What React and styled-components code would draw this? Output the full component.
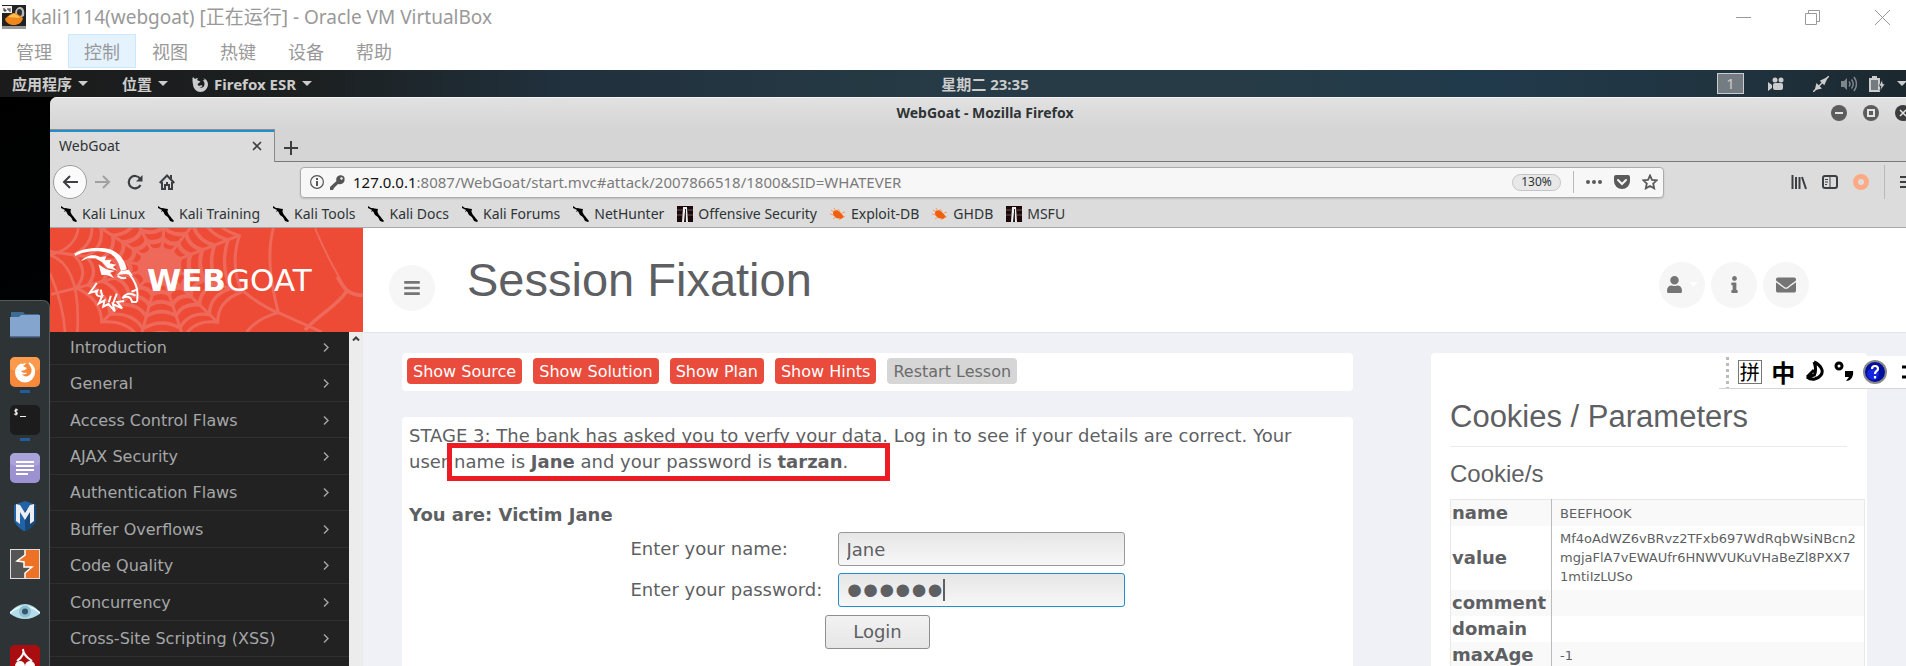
import React from "react";
import styled, { createGlobalStyle } from "styled-components";
import { FaUser, FaInfo, FaEnvelope, FaBars } from "react-icons/fa";

const ui = `"Noto Sans", "Noto Sans CJK SC", sans-serif`;
const page = `"DejaVu Sans", sans-serif`;
const head = `"Liberation Sans", sans-serif`;

const GlobalStyle = createGlobalStyle`
  * { box-sizing: border-box; }
  body { margin: 0; background: #03070b; }
  button, input { font: inherit; color: inherit; }
  button { padding: 0; border: 0; background: none; }
  h1, h2, h3, p, ul { margin: 0; padding: 0; font-weight: 400; }
  a { color: inherit; text-decoration: none; }
  svg { display: block; flex: none; }
`;

const Screen = styled.div`
  position: relative;
  display: flex;
  flex-direction: column;
  height: 100vh;
  overflow: hidden;
  font-family: ${ui};
`;

/* host window */
const HostBar = styled.header`
  background: #fff;
  color: #999;
  height: 70px;
  flex: none;
`;
const HostTitle = styled.div`
  display: flex;
  align-items: center;
  height: 34px;
  padding: 0 16px 0 2px;
`;
const HostName = styled.h1`
  flex: 1;
  margin-left: 5px;
  font-size: 19px;
  line-height: 34px;
`;
const HostButtons = styled.div`
  display: flex;
  gap: 54px;
`;
const HostMenu = styled.nav`
  display: flex;
`;
const HostMenuItem = styled.button`
  width: 68px;
  height: 34px;
  font-size: 18px;
  border: 1px solid ${(p) => (p.$active ? "#cce8ff" : "transparent")};
  background: ${(p) => (p.$active ? "#e5f3ff" : "transparent")};
`;

/* desktop panel */
const Panel = styled.div`
  display: grid;
  grid-template-columns: 1fr auto 1fr;
  align-items: center;
  flex: none;
  height: 27px;
  margin-right: -64px;
  padding: 0 12px;
  color: #ccc;
  font-size: 15px;
  line-height: 26px;
  font-weight: 700;
  background: linear-gradient(90deg, #1b1b1b 0, #1c2021 16%, #20303c 28%, #263b45 48%, #263b45 62%, #213a4b 75%, #20333f 88%, #1b272d 97%);
`;
const PanelMenus = styled.div`
  display: flex;
  align-items: center;
`;
const PanelMenu = styled.button`
  display: flex;
  align-items: center;
  gap: 6px;
  margin-right: ${(p) => p.$after || 0}px;
`;
const Tray = styled.div`
  display: flex;
  align-items: center;
  justify-content: flex-end;
  gap: 12px;
  padding-right: 51px;
`;
const Workspace = styled.span`
  width: 27px;
  height: 21px;
  border: 1px solid #ccc;
  background: #737c82;
  line-height: 19px;
  text-align: center;
  font-weight: 400;
`;
const TrayIcon = styled.span`
  margin-left: ${(p) => p.$before || 0}px;
`;

const Desktop = styled.div`
  display: flex;
  flex: 1;
  min-height: 0;
  margin-right: -14px;
  background: linear-gradient(160deg, #000 0, #020a10 100%);
`;
const DockColumn = styled.aside`
  width: 50px;
  flex: none;
  padding-top: 203px;
`;
const Dock = styled.nav`
  display: flex;
  flex-direction: column;
  height: 100%;
  padding: 8px 9px 0 10px;
  background: #2e3436;
  border: solid #555a5c;
  border-width: 1px 1px 0 0;
  border-radius: 0 7px 0 0;
`;
const DockItem = styled.button`
  display: flex;
  flex-direction: column;
  align-items: center;
  gap: 3px;
  height: 48px;
  flex: none;
`;
const Running = styled.span`
  width: 10px;
  height: 3px;
  background: #215d9c;
`;

/* browser */
const Browser = styled.main`
  display: flex;
  flex-direction: column;
  flex: 1;
  min-width: 0;
  border-radius: 7px 0 0 0;
  overflow: hidden;
  background: #dcdcdc;
  color: #2e3436;
`;
const BrowserTitle = styled.div`
  position: relative;
  flex: none;
  height: 32px;
  border-top: 1px solid #f3f3f3;
  background: linear-gradient(#e1e1e1, #d5d5d5);
  font-size: 14px;
  font-weight: 700;
  line-height: 30px;
  text-align: center;
`;
const WindowButtons = styled.div`
  position: absolute;
  right: 9px;
  top: 7px;
  display: flex;
  gap: 16px;
`;
const TabStrip = styled.div`
  display: flex;
  flex: none;
  height: 33px;
  background: #d5d5d5;
`;
const Tab = styled.button`
  display: flex;
  align-items: center;
  justify-content: space-between;
  width: 225px;
  padding: 0 12px 1px 9px;
  font-size: 14px;
  border-right: 1px solid #8c8c8c;
  border-top: 1px solid #8c8c8c;
  background: #dcdcdc;
  box-shadow: inset 0 2px #1f8fd0;
`;
const TabRest = styled.div`
  flex: 1;
  padding: 9px 9px 0;
  border-bottom: 1px solid #77797a;
`;
const Toolbar = styled.div`
  display: flex;
  align-items: center;
  flex: none;
  height: 38px;
  padding: 2px 16px 0 3px;
`;
const BackButton = styled.button`
  display: grid;
  place-items: center;
  width: 34px;
  height: 34px;
  border: 1px solid #9c9c9c;
  border-radius: 50%;
  background: #fafafa;
`;
const ToolButton = styled.button`
  display: grid;
  place-items: center;
  width: 32px;
  height: 32px;
`;
const Address = styled.div`
  display: flex;
  align-items: center;
  flex: 1;
  height: 31px;
  margin: 0 127px 0 117px;
  padding: 0 5px 0 9px;
  border: 1px solid #ababab;
  border-radius: 4px;
  background: #f7f7f7;
  box-shadow: 0 1px 2px #0002;
  font-size: 15px;
`;
const Identity = styled.div`
  display: flex;
  align-items: center;
  gap: 6px;
`;
const Url = styled.div`
  flex: 1;
  margin-left: 8px;
  color: #7b7b7b;
  b { color: #111; font-weight: 400; }
`;
const Zoom = styled.button`
  width: 49px;
  height: 17px;
  margin-right: 12px;
  border: 1px solid #c4c4c4;
  border-radius: 9px;
  background: #e8e8e8;
  font-size: 12px;
  line-height: 14px;
`;
const Divider = styled.span`
  width: 1px;
  height: ${(p) => p.$h}px;
  background: #b9b9b9;
`;
const AddressActions = styled.div`
  display: flex;
  gap: 12px;
  margin-left: 12px;
`;
const RightTools = styled.div`
  display: flex;
  align-items: center;
  gap: 15px;
  height: 34px;
  margin-right: -12px;
`;
const Bookmarks = styled.nav`
  display: flex;
  align-items: center;
  flex: none;
  gap: 13px;
  height: 28px;
  padding: 0 11px;
  border-bottom: 1px solid #a9a9a9;
  font-size: 14px;
`;
const Bookmark = styled.a`
  display: flex;
  align-items: center;
  gap: 5px;
  line-height: 27px;
`;

/* web application */
const Site = styled.div`
  display: grid;
  grid-template-columns: 313px 1fr;
  grid-template-rows: 105px 1fr;
  flex: 1;
  min-height: 0;
  background: #f0f1f7;
  color: #5e5f63;
  font-family: ${page};
`;
const Brand = styled.a`
  position: relative;
  display: flex;
  align-items: center;
  gap: 8px;
  height: 104px;
  padding-left: 24px;
  background: #ed4b36;
  color: #fff;
  font-size: 31px;
  overflow: hidden;
`;
const WebLayer = styled.svg`
  position: absolute;
  inset: 0;
  width: 313px;
  height: 104px;
`;
const GoatDrawing = styled.svg`
  position: relative;
`;
const BrandName = styled.span`
  position: relative;
`;
const SiteHeader = styled.header`
  display: flex;
  align-items: center;
  padding: 0 111px 0 26px;
  background: #fff;
  border-bottom: 1px solid #e4e5ea;
`;
const Round = styled.button`
  display: flex;
  align-items: center;
  justify-content: center;
  gap: 6px;
  width: 46px;
  height: 46px;
  border-radius: 50%;
  background: #f6f6f6;
  color: #757575;
  font-size: 18px;
`;
const MenuSlot = styled.div`
  padding-top: 15px;
`;
const LessonTitle = styled.h1`
  flex: 1;
  margin-left: 32px;
  font: 47px/104px ${head};
`;
const HeaderActions = styled.div`
  display: flex;
  gap: 6px;
  padding-top: 9px;
`;
const Side = styled.div`
  display: flex;
  min-height: 0;
  margin-top: -1px;
  overflow: hidden;
  background: #222;
`;
const Lessons = styled.ul`
  display: grid;
  grid-template-rows: repeat(9, 1fr);
  flex: 1;
  height: 328px;
  margin-top: -3px;
  list-style: none;
`;
const Lesson = styled.li`
  display: grid;
  border-bottom: 1px solid #2f2f2f;
`;
const LessonLink = styled.a`
  display: flex;
  align-items: center;
  justify-content: space-between;
  padding: 1px 20px 0;
  color: #a5a7a9;
  font-size: 16px;
`;
const ScrollTrack = styled.div`
  width: 14px;
  padding: 4px 3px;
  background: #ececec;
`;
const Columns = styled.div`
  display: grid;
  grid-template-columns: 951fr 436fr;
  gap: 78px;
  min-height: 0;
  padding: 20px 53px 0 39px;
`;
const LessonColumn = styled.div`
  display: flex;
  flex-direction: column;
  gap: 26px;
`;
const Actions = styled.div`
  display: flex;
  gap: 11px;
  padding: 5px 5px 7px;
  border-radius: 4px;
  background: #fff;
`;
const Action = styled.button`
  height: 26px;
  padding: 0 6px;
  border-radius: 4px;
  font-size: 16px;
  background: ${(p) => (p.$muted ? "#d6d6d6" : "#e94c3d")};
  color: ${(p) => (p.$muted ? "#6b6b6b" : "#fff")};
`;
const LessonCard = styled.section`
  position: relative;
  flex: 1;
  padding: 6px 7px;
  border-radius: 4px 4px 0 0;
  background: #fff;
  font-size: 18px;
  line-height: 26px;
`;
const Marker = styled.span`
  position: absolute;
  left: 45px;
  top: 26px;
  width: 443px;
  height: 38px;
  border: 5px solid #ed1c24;
`;
const Who = styled.p`
  margin-top: 27px;
  font-weight: 700;
`;
const LoginForm = styled.form`
  display: grid;
  grid-template-columns: 207px 287px;
  justify-content: center;
  align-items: center;
  row-gap: 7px;
  margin-top: 4px;
`;
const Field = styled.div`
  position: relative;
`;
const Input = styled.input`
  display: block;
  width: 100%;
  height: 34px;
  padding: 0 8px;
  border: 1px solid #999;
  border-radius: 3px;
  outline: 0;
  background: linear-gradient(#e6e6e6, #f7f7f7);
`;
const PasswordInput = styled(Input)`
  border-color: #1f8fd0;
  font: 46px/32px ${head};
`;
const Caret = styled.span`
  position: absolute;
  left: 105px;
  top: 6px;
  width: 2px;
  height: 22px;
  background: #5e5f63;
`;
const Submit = styled.button`
  grid-column: 1 / -1;
  justify-self: center;
  width: 105px;
  height: 34px;
  margin-top: 1px;
  border: 1px solid #8f8f8f;
  border-radius: 3px;
  background: linear-gradient(#f2f2f2, #e6e6e6);
`;
const CookieCard = styled.aside`
  min-width: 0;
  padding: 38px 2px 0 19px;
  border-radius: 4px 4px 0 0;
  background: #fff;
`;
const CookieTitle = styled.h2`
  margin-right: 18px;
  padding-bottom: 4px;
  border-bottom: 1px solid #ebebeb;
  font: 31px/51px ${head};
`;
const CookieSub = styled.h3`
  font: 24px/26px ${head};
  margin: 14px 0 12px;
`;
const CookieTable = styled.table`
  width: 100%;
  table-layout: fixed;
  border-collapse: collapse;
  border: 1px solid #e8e8e8;
  font-size: 13px;
`;
const CookieRow = styled.tr`
  height: 26px;
  &:nth-child(odd) { background: #f9f9f9; }
`;
const Key = styled.th`
  width: 101px;
  padding: 0 1px;
  border-right: 1px solid #bbb;
  font-size: 18px;
  line-height: 26px;
  text-align: left;
`;
const Value = styled.td`
  padding: ${(p) => (p.$long ? "3px 8px 4px" : "0 8px")};
  line-height: 19px;
  word-break: break-all;
`;
const ImeBar = styled.div`
  position: absolute;
  right: 0;
  top: 356px;
  display: flex;
  align-items: center;
  gap: 9px;
  width: 187px;
  height: 33px;
  padding-left: 7px;
  background: #fff;
  border-bottom: 1px solid #d5d5d5;
  color: #000;
  font: 24px/30px "Noto Sans CJK SC", sans-serif;
`;
const ImeMode = styled.button`
  width: 24px;
  height: 24px;
  border: 1px solid #777;
  font-size: 20px;
  line-height: 20px;
`;
const ImeLang = styled.button`
  width: 26px;
  font-weight: 700;
  line-height: 30px;
`;

/* drawings */
const Down = () => <svg width="10" height="5"><path d="M0 0h10L5 5z" fill="#ccc" /></svg>;

const VmIcon = () => (
  <svg width="24" height="24" viewBox="0 0 24 24">
    <rect width="24" height="24" fill="#222" />
    <path d="M13 9C13 4 16 2 18 2c3 0 5 3 4 9l-4 2z" fill="#b9b9b9" />
    <ellipse cx="17.500" cy="7.500" rx="2.500" ry="3.500" fill="#333" />
    <rect x="0" y="1" width="10" height="7" fill="#f4f4f4" />
    <path d="M2 3v3h2V5H2M6 3v2h2M8 3v4" stroke="#333" fill="none" />
    <path d="M3 14c3-3 6-6 9-6s6 3 9 5c-1 5-5 7-9 7s-8-2-9-6z" fill="#f0861c" />
    <path d="M6 12c3-2 5-4 7-3s4 2 5 4z" fill="#ffc04d" />
    <path d="M0 21h24v3H0z" fill="#999" />
  </svg>
);
const Fox = ({ size = 16, color = "#ccc", hole = "#1c1f20" }) => (
  <svg width={size} height={size} viewBox="0 0 16 16">
    <path d="M1 1l2 2c1-.5 2-1 3-1L5 4l2 1 1.500.5L7 7 5.500 8c.5 2 2 2 3 1.500 1-.5 2 0 2 .5-1 1-2 1.500-3 1.500 3 1 5-1 5-3.500 0-2-1-3-2-4l2 .5-1-2.500c3 1 4.500 4 4.500 6.500a7.500 7.500 0 0 1-15 0C.5 5 0 3 1 1z" fill={color} />
    <path d="M11 0c1 1 2 3 2 4" stroke={hole} strokeWidth=".6" fill="none" />
  </svg>
);
const Dragon = () => (
  <svg width="16" height="16" viewBox="0 0 16 16">
    <path d="M0 0l3 2 4 1 2 2 2 4 5 6-1 1-3-1-2-4-3-2-2-4-2 1 1-2-4-2z" fill="#000" />
    <path d="M3 2l7 1-1 4-3-1zM6 7l6 3 2 5-4-4z" fill="#000" />
  </svg>
);
const Offsec = () => (
  <svg width="16" height="16" viewBox="0 0 16 16">
    <rect width="16" height="16" fill="#1c0808" />
    <path d="M0 4h5M11 4h5M0 9h5M11 9h5" stroke="#655" />
    <path d="M6 1h4l1 15H9V6H8l-1 10H5z" fill="#eee" />
    <path d="M8 3h1v12H8z" fill="#222" />
  </svg>
);
const Bug = () => (
  <svg width="16" height="16" viewBox="0 0 16 16">
    <path d="M3 5l4-1 4 3 3 4-3 2-5-1-3-3z" fill="#f0600c" />
    <path d="M1 4l3 2M4 2l2 3M0 8l4 1M3 13l3-2M8 3l2 3M12 7l3-1M13 10l2 1M9 12l1 2" stroke="#f59a63" />
  </svg>
);
const stroke = { fill: "none", stroke: "#3c3f41", strokeWidth: 2 };

const Back = () => <svg width="16" height="16" viewBox="0 0 16 16"><path d="M16 8H2M8 2L2 8l6 6" {...stroke} /></svg>;
const Forward = () => <svg width="16" height="16" viewBox="0 0 16 16"><path d="M0 8h14M8 2l6 6-6 6" {...stroke} stroke="#a0a0a0" /></svg>;
const Reload = () => (
  <svg width="16" height="16" viewBox="0 0 16 16">
    <path d="M13.500 11A6.200 6.200 0 1 1 13 4.500" {...stroke} strokeWidth="2.200" />
    <path d="M15.500 1v6.500H9z" fill="#3c3f41" />
  </svg>
);
const Home = () => (
  <svg width="16" height="16" viewBox="0 0 16 16">
    <path d="M.7 9L8 1.500 15.300 9" {...stroke} />
    <path d="M3 8v7h3v-4h4v4h3V8" {...stroke} />
    <path d="M7 8h2v2H7zM11 1h2v4h-2z" fill="#3c3f41" />
  </svg>
);
const InfoRing = () => (
  <svg width="14" height="14" viewBox="0 0 14 14">
    <circle cx="7" cy="7" r="6.400" fill="none" stroke="#555" strokeWidth="1.200" />
    <path d="M6 3h2v2H6zM6 6h2v5H6z" fill="#555" />
  </svg>
);
const KeyIcon = () => (
  <svg width="15" height="15" viewBox="0 0 15 15">
    <path d="M14.500 2.500C13-.5 9-.5 7 2c-1 1.500-1 3-.5 4L0 12v3h3l1-2 1-1 1-1 2-2c3 1 6-1 6.500-3z" fill="#555" />
    <circle cx="11.500" cy="3.500" r="1.200" fill="#f7f7f7" />
  </svg>
);
const Dots = () => <svg width="16" height="16"><g fill="#5a5a5a"><circle cx="2" cy="8" r="2" /><circle cx="8" cy="8" r="2" /><circle cx="14" cy="8" r="2" /></g></svg>;
const Pocket = () => (
  <svg width="16" height="16" viewBox="0 0 16 16">
    <path d="M2 1h12q2 0 2 2v4a8 8 0 0 1-16 0V3q0-2 2-2z" fill="#5a5a5a" />
    <path d="M4 6l4 4 4-4" stroke="#f7f7f7" strokeWidth="2" fill="none" strokeLinecap="round" />
  </svg>
);
const Star = () => <svg width="16" height="16" viewBox="0 0 16 16"><path d="M8 1.500l2 4.300 4.700.5-3.500 3.200 1 4.900L8 12l-4.200 2.400 1-4.900L1.300 6.300 6 5.800z" fill="none" stroke="#5a5a5a" strokeWidth="1.800" /></svg>;
const Library = () => <svg width="16" height="16" viewBox="0 0 16 16"><path d="M1.500 1v14M5 3v12M8.500 3v12M11 3l4 12" {...stroke} /></svg>;
const SidebarIcon = () => (
  <svg width="16" height="16" viewBox="0 0 16 16">
    <rect x="1" y="2" width="14" height="12" rx="2" {...stroke} />
    <path d="M8 2v12" stroke="#3c3f41" /><path d="M3 5.500h3M3 8h3M3 10.500h2" stroke="#3c3f41" />
  </svg>
);
const Ring = () => <svg width="16" height="16"><circle cx="8" cy="8" r="5.500" fill="none" stroke="#ffaa85" strokeWidth="5" /></svg>;
const Burger = () => <svg width="16" height="16"><path d="M0 3h16M0 8h16M0 13h16" {...stroke} /></svg>;
const Chevron = () => <svg width="6" height="9" viewBox="0 0 6 9"><path d="M1 .5l4 4-4 4" fill="none" stroke="#a5a7a9" strokeWidth="1.400" /></svg>;

const WinDot = ({ d, dark }) => (
  <svg width="16" height="16" viewBox="0 0 16 16">
    <circle cx="8" cy="8" r="8" fill={dark ? "#3c3c3c" : "#5c5c5c"} />
    <path d={d} fill="none" stroke="#e4e4e4" strokeWidth={dark ? 1.5 : 2} />
  </svg>
);

const Camera = () => (
  <svg width="16" height="16" viewBox="0 0 16 16" fill="#ccc">
    <circle cx="7" cy="4" r="2.500" /><circle cx="13" cy="4" r="2.500" />
    <rect x="5" y="7" width="10" height="7" rx="2" /><path d="M0 6l4 3v3l-4 3z" />
  </svg>
);
const Plug = () => (
  <svg width="16" height="16" viewBox="0 0 16 16">
    <path d="M0 16L16 0" stroke="#ccc" strokeWidth="1.500" />
    <path d="M3 13l1-4 3 3zM13 3L8.500 5 11 7.500z" fill="#ccc" stroke="#ccc" strokeWidth="2" />
  </svg>
);
const Volume = () => (
  <svg width="16" height="16" viewBox="0 0 16 16">
    <path d="M0 5h3l3-3v12l-3-3H0z" fill="#7d868b" />
    <path d="M8 5.500q2 2.500 0 5M10.500 3.500q3.500 4.500 0 9M13 1q5 7 0 14" fill="none" stroke="#7d868b" strokeWidth="1.500" />
  </svg>
);
const Battery = () => (
  <svg width="16" height="16" viewBox="0 0 16 16">
    <path d="M0 2h3V0h5v2h3v14H0z" fill="#ccc" /><path d="M2 4h7v10H2z" fill="#727b80" />
    <path d="M13 4l-3 6h2l-1 5 5-7h-2z" fill="#ccc" stroke="#1e2b33" strokeWidth=".6" />
  </svg>
);

const spokes = [0.35, 0.85, 1.3, 1.8, 2.3, 2.85, 3.3, 3.8, 4.3, 4.8, 5.3, 5.85];
const point = (r, a) => `${Math.round(480 + r * Math.cos(a))} ${Math.round(140 + r * Math.sin(a) * 0.85)}`;
const ringPath = (r) =>
  spokes.map((a, i) => {
    const next = i === spokes.length - 1 ? spokes[0] + Math.PI * 2 : spokes[i + 1];
    return `${i ? "" : `M${point(r, a)}`}Q${point(r * 0.8, (a + next) / 2)} ${point(r, next)}`;
  }).join("");

const SpiderWeb = () => (
  <WebLayer viewBox="150 24 939 312" preserveAspectRatio="none" aria-hidden="true">
    <g fill="none" stroke="#ee695a">
      {[65, 100, 140, 180, 225, 262].map((r, i) => <path key={r} d={ringPath(r)} strokeWidth={14 - i} />)}
      {spokes.map((a) => <path key={a} d={`M480 140L${point(a > 2.6 && a < 3.6 ? 340 : 260, a)}`} strokeWidth="9" />)}
      <path strokeWidth="9" d="M720 205C760 240 800 265 835 278L965 336M820 24C798 110 815 200 835 278 790 290 760 310 740 336" />
      <path strokeWidth="6" d="M945 24C975 100 1010 160 1040 212" />
      <path strokeWidth="11" d="M1012 170C1030 205 1045 225 1089 226M1040 214C1010 260 960 280 915 330" />
      <path strokeWidth="8" d="M150 105C210 125 240 200 232 336M150 105C210 90 230 60 235 24M150 160C180 230 192 280 195 336" />
    </g>
    <ellipse cx="480" cy="140" rx="62" ry="50" fill="#ee695a" />
  </WebLayer>
);

const Goat = () => (
  <GoatDrawing width="65" height="66" viewBox="222 78 194 198" aria-hidden="true">
    <g fill="#fff">
      <path d="M222 98C250 80 300 78 330 85 362 98 374 120 380 145L362 150C356 125 348 106 325 96 295 87 250 89 226 105z" />
      <path d="M242 121C255 104 280 97 300 108L318 106 314 118 334 116 328 127 348 131 338 138 352 149 322 141 306 124 286 112 262 112z" />
      <path d="M295 130L318 145 344 150 330 155 342 171 320 162 304 162z" />
      <path d="M350 162L362 150 386 146 398 164 378 159z" />
    </g>
    <g fill="none" stroke="#fff" strokeWidth="6">
      <path d="M386 156C400 175 413 195 412 218L411 242M410 206L394 212M406 224C390 213 374 218 367 232 378 223 392 226 396 243L410 243" />
      <path d="M352 164C362 172 370 174 378 170" />
      <path d="M290 186L269 215 291 209C284 221 294 228 306 226L296 247 313 238 309 257 325 249 344 271 338 249 366 262 351 243 372 240M306 226L302 206M326 244L332 224M338 249L350 218" />
    </g>
  </GoatDrawing>
);

const Tile = ({ children }) => <svg width="30" height="30" viewBox="0 0 30 30">{children}</svg>;
const dock = [
  ["Files", <Tile key="i"><path d="M1 3h12l2 2h14v10H1z" fill="#3d6c92" /><path d="M0 8h9l2-2h19v22H0z" fill="#84a5cd" /><path d="M0 27h30v1.500H0z" fill="#536f97" /></Tile>],
  ["Firefox", <Tile key="i"><rect width="30" height="30" rx="5" fill="#f7893c" /><rect width="30" height="14" rx="5" fill="#fb9a4c" /><circle cx="15" cy="15.500" r="10" fill="#fff" /><path d="M8 4l4 3 4-1-2 3 5 1 3-6H9z" fill="#fb9a4c" /><path d="M11 14l4-1 2-2-4-2 4-2c6 2 6 10 1 12-2 1-5 0-6-2 2 1 4 0 5-1-2-1-3 1-6-2z" fill="#f7893c" /><path d="M19 6c5 3 6 8 4 12" stroke="#fff" strokeWidth="2" fill="none" /></Tile>, true],
  ["Terminal", <Tile key="i"><rect width="30" height="30" rx="5" fill="#1c1c1c" /><path d="M8 5c-3-1-4 1-2 2s2 3-2 2M6 3.500v7M10 11.500h6" stroke="#f0f0f0" fill="none" strokeWidth="1.200" /></Tile>, true],
  ["Text editor", <Tile key="i"><rect width="30" height="30" rx="5" fill="#9c92d2" /><rect width="30" height="13" rx="5" fill="#a9a3da" /><path d="M6 9h18M6 13h18M6 17h18M6 21h12" stroke="#fff" strokeWidth="2" /></Tile>],
  ["Metasploit", <Tile key="i"><path d="M15 0l11 4v13c0 7-7 11-11 14C11 28 4 24 4 17V4z" fill="#2263a8" /><path d="M15 9l11-5v13c0 7-7 11-11 14z" fill="#174678" /><path d="M6 3l4 1 5 8 5-8 4-1v17l-4 3V11l-5 8-5-8v12l-4-3z" fill="#eceef5" /></Tile>],
  ["Burp Suite", <Tile key="i"><rect x=".5" y=".5" width="29" height="29" fill="#555" stroke="#ddd" /><path d="M15 1h14v28H15v-5l7-6h-8v-5l-7-1 8-6z" fill="#ed7226" /><path d="M15 1v5l-8 6 7 1v5l8 0-7 6v5" stroke="#fff" fill="none" strokeWidth="1.500" /></Tile>],
  ["Zenmap", <Tile key="i"><path d="M-1 16Q7 7 15 7t16 9Q23 22 15 22T-1 16z" fill="#b4dce9" /><path d="M0 16Q15 3 30 16" stroke="#e8fbff" strokeWidth="1.500" fill="none" /><circle cx="15" cy="14.500" r="6" fill="#8ec0d2" /><circle cx="15" cy="14.500" r="3" fill="#36566a" /></Tile>],
  ["CherryTree", <Tile key="i"><rect width="30" height="30" rx="5" fill="#aa0d10" /><path d="M13 4c2 5-2 9-6 12M13 5c1 6 5 8 9 11" stroke="#fff" strokeWidth="2" fill="none" /><circle cx="10" cy="21" r="5" fill="#fff" /><circle cx="20" cy="21" r="5" fill="#fff" /></Tile>],
];

const bookmarks = [
  ["Kali Linux", Dragon], ["Kali Training", Dragon], ["Kali Tools", Dragon], ["Kali Docs", Dragon],
  ["Kali Forums", Dragon], ["NetHunter", Dragon], ["Offensive Security", Offsec],
  ["Exploit-DB", Bug], ["GHDB", Bug], ["MSFU", Offsec],
];
const lessons = [
  "Introduction", "General", "Access Control Flaws", "AJAX Security", "Authentication Flaws",
  "Buffer Overflows", "Code Quality", "Concurrency", "Cross-Site Scripting (XSS)",
];
const cookie = [
  ["name", "BEEFHOOK"],
  ["value", "Mf4oAdWZ6vBRvz2TFxb697WdRqbWsiNBcn2mgjaFlA7vEWAUfr6HNWVUKuVHaBeZl8PXX71mtiIzLUSo"],
  ["comment", ""], ["domain", ""], ["maxAge", "-1"],
];

export default function App() {
  return (
    <Screen>
      <GlobalStyle />
      <HostBar>
        <HostTitle>
          <VmIcon />
          <HostName>kali1114(webgoat) [正在运行] - Oracle VM VirtualBox</HostName>
          <HostButtons>
            <button aria-label="Minimize"><svg width="15" height="15"><path d="M0 7.500h15" stroke="#999" /></svg></button>
            <button aria-label="Restore"><svg width="16" height="15"><path d="M.5 3.500h11v11H.5zM3.500 3.500v-3h11v11h-3" stroke="#999" fill="none" /></svg></button>
            <button aria-label="Close"><svg width="15" height="15"><path d="M0 0l15 15M15 0L0 15" stroke="#999" /></svg></button>
          </HostButtons>
        </HostTitle>
        <HostMenu>
          {["管理", "控制", "视图", "热键", "设备", "帮助"].map((t) => (
            <HostMenuItem key={t} $active={t === "控制"}>{t}</HostMenuItem>
          ))}
        </HostMenu>
      </HostBar>

      <Panel>
        <PanelMenus>
          <PanelMenu $after={34}>应用程序<Down /></PanelMenu>
          <PanelMenu $after={24}>位置<Down /></PanelMenu>
          <PanelMenu><Fox />Firefox ESR<Down /></PanelMenu>
        </PanelMenus>
        <span>星期二 23:35</span>
        <Tray>
          <Workspace>1</Workspace>
          <TrayIcon $before={12}><Camera /></TrayIcon>
          <TrayIcon $before={17}><Plug /></TrayIcon>
          <Volume />
          <Battery />
          <Down />
        </Tray>
      </Panel>

      <Desktop>
        <DockColumn>
          <Dock>
            {dock.map(([name, icon, on]) => (
              <DockItem key={name} aria-label={name}>{icon}{on && <Running />}</DockItem>
            ))}
          </Dock>
        </DockColumn>

        <Browser>
          <BrowserTitle>
            WebGoat - Mozilla Firefox
            <WindowButtons>
              <button aria-label="Minimize"><WinDot d="M4 8h8" /></button>
              <button aria-label="Maximize"><WinDot d="M5 5h6v6H5z" /></button>
              <button aria-label="Close"><WinDot dark d="M5 5l6 6M11 5l-6 6" /></button>
            </WindowButtons>
          </BrowserTitle>
          <TabStrip>
            <Tab>WebGoat<svg width="10" height="10"><path d="M1 1l8 8M9 1L1 9" {...stroke} strokeWidth="1.600" /></svg></Tab>
            <TabRest>
              <button aria-label="New tab"><svg width="14" height="14"><path d="M7 0v14M0 7h14" {...stroke} /></svg></button>
            </TabRest>
          </TabStrip>
          <Toolbar>
            <BackButton aria-label="Back"><Back /></BackButton>
            <ToolButton aria-label="Forward"><Forward /></ToolButton>
            <ToolButton aria-label="Reload"><Reload /></ToolButton>
            <ToolButton aria-label="Home"><Home /></ToolButton>
            <Address>
              <Identity><InfoRing /><KeyIcon /></Identity>
              <Url><b>127.0.0.1</b>:8087/WebGoat/start.mvc#attack/2007866518/1800&amp;SID=WHATEVER</Url>
              <Zoom>130%</Zoom>
              <Divider $h={22} />
              <AddressActions>
                <Dots /><Pocket /><Star />
              </AddressActions>
            </Address>
            <RightTools>
              <Library /><SidebarIcon /><Ring /><Divider $h={34} /><Burger />
            </RightTools>
          </Toolbar>
          <Bookmarks>
            {bookmarks.map(([name, Icon]) => (
              <Bookmark key={name} href="#"><Icon />{name}</Bookmark>
            ))}
          </Bookmarks>

          <Site>
            <Brand href="#">
              <SpiderWeb />
              <Goat />
              <BrandName><b>WEB</b>GOAT</BrandName>
            </Brand>
            <SiteHeader>
              <MenuSlot><Round aria-label="Toggle menu"><FaBars /></Round></MenuSlot>
              <LessonTitle>Session Fixation</LessonTitle>
              <HeaderActions>
                <Round aria-label="User">
                  <FaUser size={17} />
                  <svg width="9" height="5"><path d="M0 0h9L4.500 5z" fill="#fff" /></svg>
                </Round>
                <Round aria-label="About"><FaInfo size={17} /></Round>
                <Round aria-label="Contact"><FaEnvelope size={20} /></Round>
              </HeaderActions>
            </SiteHeader>
            <Side>
              <Lessons>
                {lessons.map((l) => (
                  <Lesson key={l}><LessonLink href="#">{l}<Chevron /></LessonLink></Lesson>
                ))}
              </Lessons>
              <ScrollTrack>
                <svg width="8" height="5"><path d="M1 4.500l3-3 3 3" {...stroke} /></svg>
              </ScrollTrack>
            </Side>
            <Columns>
              <LessonColumn>
                <Actions>
                  <Action>Show Source</Action>
                  <Action>Show Solution</Action>
                  <Action>Show Plan</Action>
                  <Action>Show Hints</Action>
                  <Action $muted>Restart Lesson</Action>
                </Actions>
                <LessonCard>
                  <p>
                    STAGE 3: The bank has asked you to verfy your data. Log in to see if your details are correct. Your
                    <br />
                    user name is <b>Jane</b> and your password is <b>tarzan</b>.
                  </p>
                  <Marker />
                  <Who>You are: Victim Jane</Who>
                  <LoginForm onSubmit={(e) => e.preventDefault()}>
                    <label htmlFor="user">Enter your name:</label>
                    <Field><Input id="user" type="text" defaultValue="Jane" /></Field>
                    <label htmlFor="pass">Enter your password:</label>
                    <Field><PasswordInput id="pass" type="password" defaultValue="tarzan" /><Caret /></Field>
                    <Submit>Login</Submit>
                  </LoginForm>
                </LessonCard>
              </LessonColumn>
              <CookieCard>
                <CookieTitle>Cookies / Parameters</CookieTitle>
                <CookieSub>Cookie/s</CookieSub>
                <CookieTable>
                  <tbody>
                    {cookie.map(([k, v]) => (
                      <CookieRow key={k}><Key scope="row">{k}</Key><Value $long={k === "value"}>{v}</Value></CookieRow>
                    ))}
                  </tbody>
                </CookieTable>
              </CookieCard>
            </Columns>
          </Site>
        </Browser>
      </Desktop>

      <ImeBar>
        <svg width="3" height="32"><path d="M1.500 1v31" stroke="#bbb" strokeWidth="3" strokeDasharray="3 3" /></svg>
        <ImeMode>拼</ImeMode>
        <ImeLang>中</ImeLang>
        <svg width="20" height="24" viewBox="0 0 20 24"><path d="M9 2c7 3 10 9 7 13s-9 6-14 2c5 1 3-1 7-2M9 2c2 5 2 10 0 14M2 17l7-7" fill="none" stroke="#000" strokeWidth="3" /></svg>
        <svg width="20" height="24" viewBox="0 0 20 24"><circle cx="5" cy="6" r="3" fill="#fff" stroke="#000" strokeWidth="3" /><path d="M11 11h8c1 5-2 10-7 10l3-4h-4z" fill="#000" /></svg>
        <svg width="24" height="24" viewBox="0 0 24 24"><circle cx="12" cy="12" r="11" fill="#000f9c" stroke="#8a8a8a" strokeWidth="2" /><circle cx="10" cy="14" r="6" fill="#1424e0" /><path d="M9 9c0-4 6-4 6 0 0 2-3 2-3 5M12 16v2.500" stroke="#fff" strokeWidth="2.200" fill="none" /></svg>
        <svg width="10" height="24" viewBox="0 0 10 24"><path d="M6 7h4M6 17h4" stroke="#000" strokeWidth="3" /></svg>
      </ImeBar>
    </Screen>
  );
}
